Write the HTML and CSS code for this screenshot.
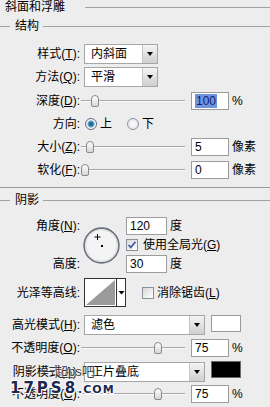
FILE: index.html
```html
<!DOCTYPE html>
<html lang="zh-CN">

<head>
    <meta charset="UTF-8">
    <title>斜面和浮雕</title>
    <link rel="stylesheet" href="styles.css">
</head>

<body>
    <div class="panel">
        <div class="heading"><span>斜面和浮雕</span></div>

        <!-- 结构 -->
        <div class="legend"><span>结构</span></div>
        <div class="row first">
            <span class="lbl">样式(<u>T</u>):</span>
            <div class="select"><span>内斜面</span><i class="drop"></i></div>
        </div>
        <div class="row tall">
            <span class="lbl">方法(<u>Q</u>):</span>
            <div class="select"><span>平滑</span><i class="drop"></i></div>
        </div>
        <div class="row">
            <span class="lbl">深度(<u>D</u>):</span>
            <div class="slider"><i class="thumb" style="left: 10px"></i></div>
            <div class="field"><span class="hilite">100</span></div>
            <span class="unit">%</span>
        </div>
        <div class="row">
            <span class="lbl">方向:</span>
            <i class="radio on"></i><span class="opt">上</span>
            <i class="radio second"></i><span class="opt">下</span>
        </div>
        <div class="row">
            <span class="lbl">大小(<u>Z</u>):</span>
            <div class="slider"><i class="thumb" style="left: 5px"></i></div>
            <div class="field">5</div>
            <span class="unit">像素</span>
        </div>
        <div class="row">
            <span class="lbl">软化(<u>F</u>):</span>
            <div class="slider"><i class="thumb" style="left: 0px"></i></div>
            <div class="field">0</div>
            <span class="unit">像素</span>
        </div>

        <div class="divider"></div>

        <!-- 阴影 -->
        <div class="legend"><span>阴影</span></div>
        <div class="angle">
            <span class="lbl a-lbl1">角度(<u>N</u>):</span>
            <svg class="dial" width="37" height="37" viewBox="0 0 37 37">
                <circle cx="18.5" cy="18.5" r="17.4" fill="#f4f4f4" stroke="#6a707c" stroke-width="1.6" />
                <circle cx="18.5" cy="18.5" r="15.8" fill="none" stroke="#dcdcdc" stroke-width="1" />
                <path d="M14.5 7v6M11.5 10h6" stroke="#000" stroke-width="1" />
                <rect x="18" y="18" width="2" height="2" fill="#000" />
            </svg>
            <div class="pair a-p1">
                <div class="field narrow">120</div>
                <span class="unit">度</span>
            </div>
            <div class="pair a-p2">
                <i class="cb on">
                    <svg width="10" height="10" viewBox="0 0 10 10">
                        <path d="M1.5 5l2.3 2.4L8.5 1.8" stroke="#3e5ca8" stroke-width="1.7" fill="none" />
                    </svg>
                </i>
                <span class="opt gl">使用全局光(<u>G</u>)</span>
            </div>
            <span class="lbl a-lbl3">高度:</span>
            <div class="pair a-p3">
                <div class="field narrow">30</div>
                <span class="unit">度</span>
            </div>
        </div>
        <div class="row contour">
            <span class="lbl">光泽等高线:</span>
            <svg class="curve" width="42" height="29" viewBox="0 0 42 29">
                <rect x="0.5" y="0.5" width="41" height="28" fill="#fff" stroke="#333" />
                <polygon points="2,27 31,2 31,27" fill="#9b9b9b" />
                <line x1="32.5" y1="1" x2="32.5" y2="28" stroke="#333" />
                <polygon points="34.5,13 40.5,13 37.5,16.5" fill="#000" />
            </svg>
            <i class="cb aa"></i><span class="opt">消除锯齿(<u>L</u>)</span>
        </div>
        <div class="row mode">
            <span class="lbl">高光模式(<u>H</u>):</span>
            <div class="select wide"><span>滤色</span><i class="drop"></i></div>
            <i class="swatch white"></i>
        </div>
        <div class="row">
            <span class="lbl">不透明度(<u>O</u>):</span>
            <div class="slider"><i class="thumb" style="left: 73px"></i></div>
            <div class="field">75</div>
            <span class="unit">%</span>
        </div>
        <div class="row shadow">
            <span class="lbl">阴影模式(<u>A</u>):</span>
            <div class="select wide"><span>正片叠底</span><i class="drop"></i></div>
            <i class="swatch black"></i>
        </div>
        <div class="row last">
            <span class="lbl">不透明度(<u>C</u>):</span>
            <div class="slider"><i class="thumb" style="left: 73px"></i></div>
            <div class="field">75</div>
            <span class="unit">%</span>
        </div>

        <div class="mark-top">一起ps吧</div>
        <div class="mark-bottom">17PS8<small>.COM</small></div>
    </div>
</body>

</html>
```

FILE: styles.css
```css
* {
    margin: 0;
    padding: 0;
    box-sizing: border-box;
}

body {
    background-color: #ededed;
    font-family: "Liberation Sans", "Noto Sans CJK SC", sans-serif;
    font-size: 12px;
    line-height: 14px;
    color: #000;
}

u {
    text-decoration-thickness: 1px;
    text-underline-offset: 1px;
}

.panel {
    position: relative;
    width: 270px;
    height: 407px;
    overflow: hidden;
}

/* titles with etched lines */
.heading,
.legend {
    display: flex;
    align-items: center;
    height: 14px;
}

.heading {
    padding-left: 5px;
}

.heading span {
    margin-right: 20px;
}

.heading::after,
.legend::after {
    content: "";
    flex: 1;
    border-top: 1px solid #a2a2a2;
}

.legend {
    margin-top: 5px;
}

.legend::before {
    content: "";
    width: 10px;
    margin-right: 5px;
    border-top: 1px solid #a2a2a2;
}

.legend span {
    margin-right: 4px;
}

.divider {
    margin-top: 6px;
    border-top: 1px solid #9a9a9a;
}

/* rows */
.row {
    display: flex;
    align-items: center;
    height: 23px;
}

.row.first {
    margin-top: 9px;
}

.row.tall {
    height: 24px;
}

.lbl {
    flex: none;
    width: 80px;
    text-align: right;
    white-space: nowrap;
}

.select {
    display: flex;
    width: 74px;
    height: 20px;
    margin-left: 4px;
    border: 1px solid #a6a6a6;
    background-color: #fff;
}

.select.wide {
    width: 121px;
}

.select span {
    flex: 1;
    padding-left: 6px;
    line-height: 18px;
}

.drop {
    display: flex;
    align-items: center;
    justify-content: center;
    width: 15px;
    border-left: 1px solid #c6c6c6;
    background: linear-gradient(#f4f4f4, #cfcfcf);
}

.drop::after {
    content: "";
    border-left: 3.5px solid transparent;
    border-right: 3.5px solid transparent;
    border-top: 4px solid #000;
}

.slider {
    position: relative;
    flex: none;
    width: 104px;
    height: 12px;
    margin-left: 1px;
}

.slider::before {
    content: "";
    position: absolute;
    left: 0;
    right: 0;
    top: 5px;
    border-top: 1px solid #a9a9a9;
    border-bottom: 1px solid #fafafa;
}

.thumb {
    position: absolute;
    top: 0;
    width: 8px;
    height: 12px;
    border: 1px solid #8a8a8a;
    border-radius: 4px 4px 2px 2px;
    background: linear-gradient(#ffffff, #d6d6d6);
}

.field {
    flex: none;
    width: 38px;
    height: 18px;
    margin-left: 6px;
    padding-left: 3px;
    border: 1px solid #9d9d9d;
    background-color: #fff;
    line-height: 16px;
}

.field.narrow {
    width: 41px;
    margin-left: 0;
}

.hilite {
    background-color: #6f93df;
    color: #0f2470;
    padding: 0 1px;
}

.unit {
    margin-left: 3px;
}

.radio {
    flex: none;
    width: 12px;
    height: 12px;
    margin-left: 5px;
    border: 1px solid #8b94a3;
    border-radius: 50%;
    background: radial-gradient(circle, #ffffff, #dcdcdc);
}

.radio.on {
    border-color: #5d6b84;
    background: radial-gradient(circle, #17557f 0, #2f7fb0 2.2px, #78b6d8 3.2px, #ffffff 4.2px, #e4e4e4 6px);
}

.radio.second {
    margin-left: 15px;
}

.opt {
    margin-left: 3px;
    white-space: nowrap;
}

/* angle block */
.angle {
    display: grid;
    grid-template-columns: 80px 46px auto;
    grid-template-rows: 20px 18px 20px;
    align-items: center;
    margin-top: 9px;
}

.a-lbl1 {
    grid-column: 1;
    grid-row: 1;
}

.a-lbl3 {
    grid-column: 1;
    grid-row: 3;
}

.dial {
    grid-column: 2;
    grid-row: 1 / 4;
    align-self: start;
    margin: 11px 0 0 3px;
}

.pair {
    display: flex;
    align-items: center;
    grid-column: 3;
}

.a-p1 {
    grid-row: 1;
}

.a-p2 {
    grid-row: 2;
}

.a-p3 {
    grid-row: 3;
}

.cb {
    display: flex;
    align-items: center;
    justify-content: center;
    flex: none;
    width: 12px;
    height: 12px;
    border: 1px solid #8a909c;
    background: linear-gradient(135deg, #d8d8d8, #ffffff);
}

.gl {
    margin-left: 5px;
}

.row.contour {
    height: 29px;
    margin-top: 4px;
}

.curve {
    flex: none;
    margin-left: 4px;
}

.cb.aa {
    margin-left: 16px;
}

.row.mode {
    margin-top: 6px;
}

.row.shadow {
    height: 25px;
}

.row.last {
    height: 20px;
}

.swatch {
    flex: none;
    width: 30px;
    height: 17px;
    margin-left: 6px;
    align-self: flex-start;
    margin-top: 2px;
    border: 1px solid #999;
}

.swatch.white {
    background-color: #fff;
}

.swatch.black {
    background-color: #000;
    border-color: #6a6a6a;
}

/* watermark over the panel */
.mark-top {
    position: absolute;
    left: 42px;
    top: 365px;
    font-size: 13px;
    color: #3a3a3a;
    text-shadow: 0 0 2px #fff, 0 0 1px #fff;
}

.mark-bottom {
    position: absolute;
    left: 10px;
    top: 381px;
    font-family: "DejaVu Sans", sans-serif;
    font-weight: bold;
    font-size: 15px;
    letter-spacing: 3px;
    color: #1c2850;
    text-shadow: 1px 1px 0 #fff, -1px -1px 0 #fff, 1px -1px 0 #fff, -1px 1px 0 #fff;
}

.mark-bottom small {
    font-size: 11px;
    letter-spacing: 1px;
}
```
